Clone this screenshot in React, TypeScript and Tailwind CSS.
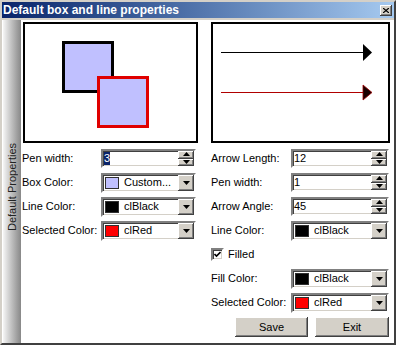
const SUNKEN =
  'border-2 border-t-[#808080] border-l-[#808080] border-b-white border-r-white shadow-[inset_1px_1px_0_#404040,inset_-1px_-1px_0_#d4d0c8]';
const RAISED =
  'bg-[#d4d0c8] shadow-[inset_-1px_-1px_0_#404040,inset_1px_1px_0_#ffffff,inset_-2px_-2px_0_#808080]';

function Spin() {
  return (
    <div className="flex flex-col w-[16px] h-full">
      <div className={`${RAISED} flex-1 flex items-center justify-center pb-[1px]`}>
        <svg width="7" height="4" viewBox="0 0 7 4">
          <path d="M3.5 0L7 4H0z" fill="#000" />
        </svg>
      </div>
      <div className={`${RAISED} flex-1 flex items-center justify-center pb-[1px]`}>
        <svg width="7" height="4" viewBox="0 0 7 4">
          <path d="M0 0H7L3.5 4z" fill="#000" />
        </svg>
      </div>
    </div>
  );
}

function SpinEdit({ value, selected, width }: { value: string; selected?: boolean; width: string }) {
  return (
    <div className={`${SUNKEN} ${width} h-[19px] bg-white flex items-stretch`}>
      <div className="flex-1 flex items-center pl-[1px]">
        <span className={selected ? 'bg-[#0a246a] text-white leading-[13px]' : 'leading-[13px]'}>{value}</span>
      </div>
      <Spin />
    </div>
  );
}

function ColorCombo({ swatch, text, width }: { swatch: string; text: string; width: string }) {
  return (
    <div className={`${SUNKEN} ${width} h-[20px] bg-white flex items-stretch`}>
      <div className="flex-1 flex items-center pl-[2px] gap-[5px]">
        <div className={`w-[14px] h-[12px] border border-[#303030] ${swatch}`} />
        <span>{text}</span>
      </div>
      <div className={`${RAISED} w-[16px] flex items-center justify-center`}>
        <svg width="7" height="4" viewBox="0 0 7 4">
          <path d="M0 0H7L3.5 4z" fill="#000" />
        </svg>
      </div>
    </div>
  );
}

function Row({ label, labelW, children }: { label: string; labelW: string; children: React.ReactNode }) {
  return (
    <div className="flex items-center h-[19px]">
      <span className={labelW}>{label}</span>
      {children}
    </div>
  );
}

export default function App() {
  return (
    <div className="w-[396px] h-[345px] flex flex-col bg-[#d4d0c8] border-2 border-t-[#d4d0c8] border-l-[#d4d0c8] border-r-[#404040] border-b-[#404040] font-['Liberation_Sans',Arial,sans-serif] text-[11px] text-black">
      <div className="h-[16px] bg-linear-to-r from-[#0a246a] to-[#a6caf0] flex items-center justify-between pl-[1px] pr-[2px]">
        <span className="text-white font-bold text-[12px] leading-none">Default box and line properties</span>
        <div className={`${RAISED} w-[12px] h-[11px] flex items-center justify-center`}>
          <svg width="6" height="5" viewBox="0 0 6 5">
            <path d="M0 0L6 5M6 0L0 5" stroke="#000" strokeWidth="1.2" />
          </svg>
        </div>
      </div>
      <div className="h-[2px]" />
      <div className="flex-1 flex bg-white pl-[1px]">
        <div className="w-[18px] bg-linear-to-r from-[#f6f6f6] to-[#888888] flex flex-col items-center">
          <div className="h-[211px] [writing-mode:vertical-rl] rotate-180 text-[#222] leading-none text-[11px]">
            Default Properties
          </div>
        </div>
        <div className="flex-1 grid grid-cols-[176px_179px] gap-x-[13px] pl-[1px] pt-[2px]">
          <div className="flex flex-col">
            <div className="ml-[1px] w-[175px] h-[121px] border-2 border-black bg-white">
              <svg width="171" height="117" viewBox="0 0 171 117">
                <rect x="38.5" y="18.5" width="49" height="49" fill="#c0c0ff" stroke="#000" strokeWidth="3" />
                <rect x="73.5" y="53.5" width="49" height="49" fill="#c0c0ff" stroke="#e00000" strokeWidth="3" />
              </svg>
            </div>
            <div className="flex flex-col gap-[5px] mt-[6px]">
              <Row label="Pen width:" labelW="w-[79px]">
                <SpinEdit value="3" selected width="w-[95px]" />
              </Row>
              <Row label="Box Color:" labelW="w-[79px]">
                <ColorCombo swatch="bg-[#c0c0ff]" text="Custom..." width="w-[95px]" />
              </Row>
              <Row label="Line Color:" labelW="w-[79px]">
                <ColorCombo swatch="bg-black" text="clBlack" width="w-[95px]" />
              </Row>
              <Row label="Selected Color:" labelW="w-[79px]">
                <ColorCombo swatch="bg-[#ff0000]" text="clRed" width="w-[95px]" />
              </Row>
            </div>
          </div>
          <div className="flex flex-col">
            <div className="w-[179px] h-[121px] border-2 border-black bg-white">
              <svg width="175" height="117" viewBox="0 0 175 117">
                <line x1="8" y1="28.5" x2="151" y2="28.5" stroke="#000" strokeWidth="1" />
                <path d="M150 20L159 28.5L150 37z" fill="#000" />
                <line x1="8" y1="68.5" x2="151" y2="68.5" stroke="#b00000" strokeWidth="1" />
                <path d="M150 61L159 68.5L150 76z" fill="#1a0000" stroke="#a00000" strokeWidth="0.8" />
              </svg>
            </div>
            <div className="flex flex-col gap-[5px] mt-[6px]">
              <Row label="Arrow Length:" labelW="w-[80px]">
                <SpinEdit value="12" width="w-[98px]" />
              </Row>
              <Row label="Pen width:" labelW="w-[80px]">
                <SpinEdit value="1" width="w-[98px]" />
              </Row>
              <Row label="Arrow Angle:" labelW="w-[80px]">
                <SpinEdit value="45" width="w-[98px]" />
              </Row>
              <Row label="Line Color:" labelW="w-[80px]">
                <ColorCombo swatch="bg-black" text="clBlack" width="w-[98px]" />
              </Row>
              <div className="flex items-center h-[19px] gap-[4px]">
                <div className={`${SUNKEN} w-[13px] h-[13px] bg-white flex items-center justify-center`}>
                  <svg width="7" height="7" viewBox="0 0 7 7">
                    <path d="M0.5 3L2.5 5L6.5 1" stroke="#000" strokeWidth="1.6" fill="none" />
                  </svg>
                </div>
                <span>Filled</span>
              </div>
              <Row label="Fill Color:" labelW="w-[80px]">
                <ColorCombo swatch="bg-black" text="clBlack" width="w-[98px]" />
              </Row>
              <Row label="Selected Color:" labelW="w-[80px]">
                <ColorCombo swatch="bg-[#ff0000]" text="clRed" width="w-[98px]" />
              </Row>
              <div className="flex justify-end gap-[7px] pr-[1px]">
                <button className={`${RAISED} w-[73px] h-[20px] flex items-center justify-center`}>Save</button>
                <button className={`${RAISED} w-[74px] h-[20px] flex items-center justify-center`}>Exit</button>
              </div>
            </div>
          </div>
        </div>
      </div>
    </div>
  );
}
